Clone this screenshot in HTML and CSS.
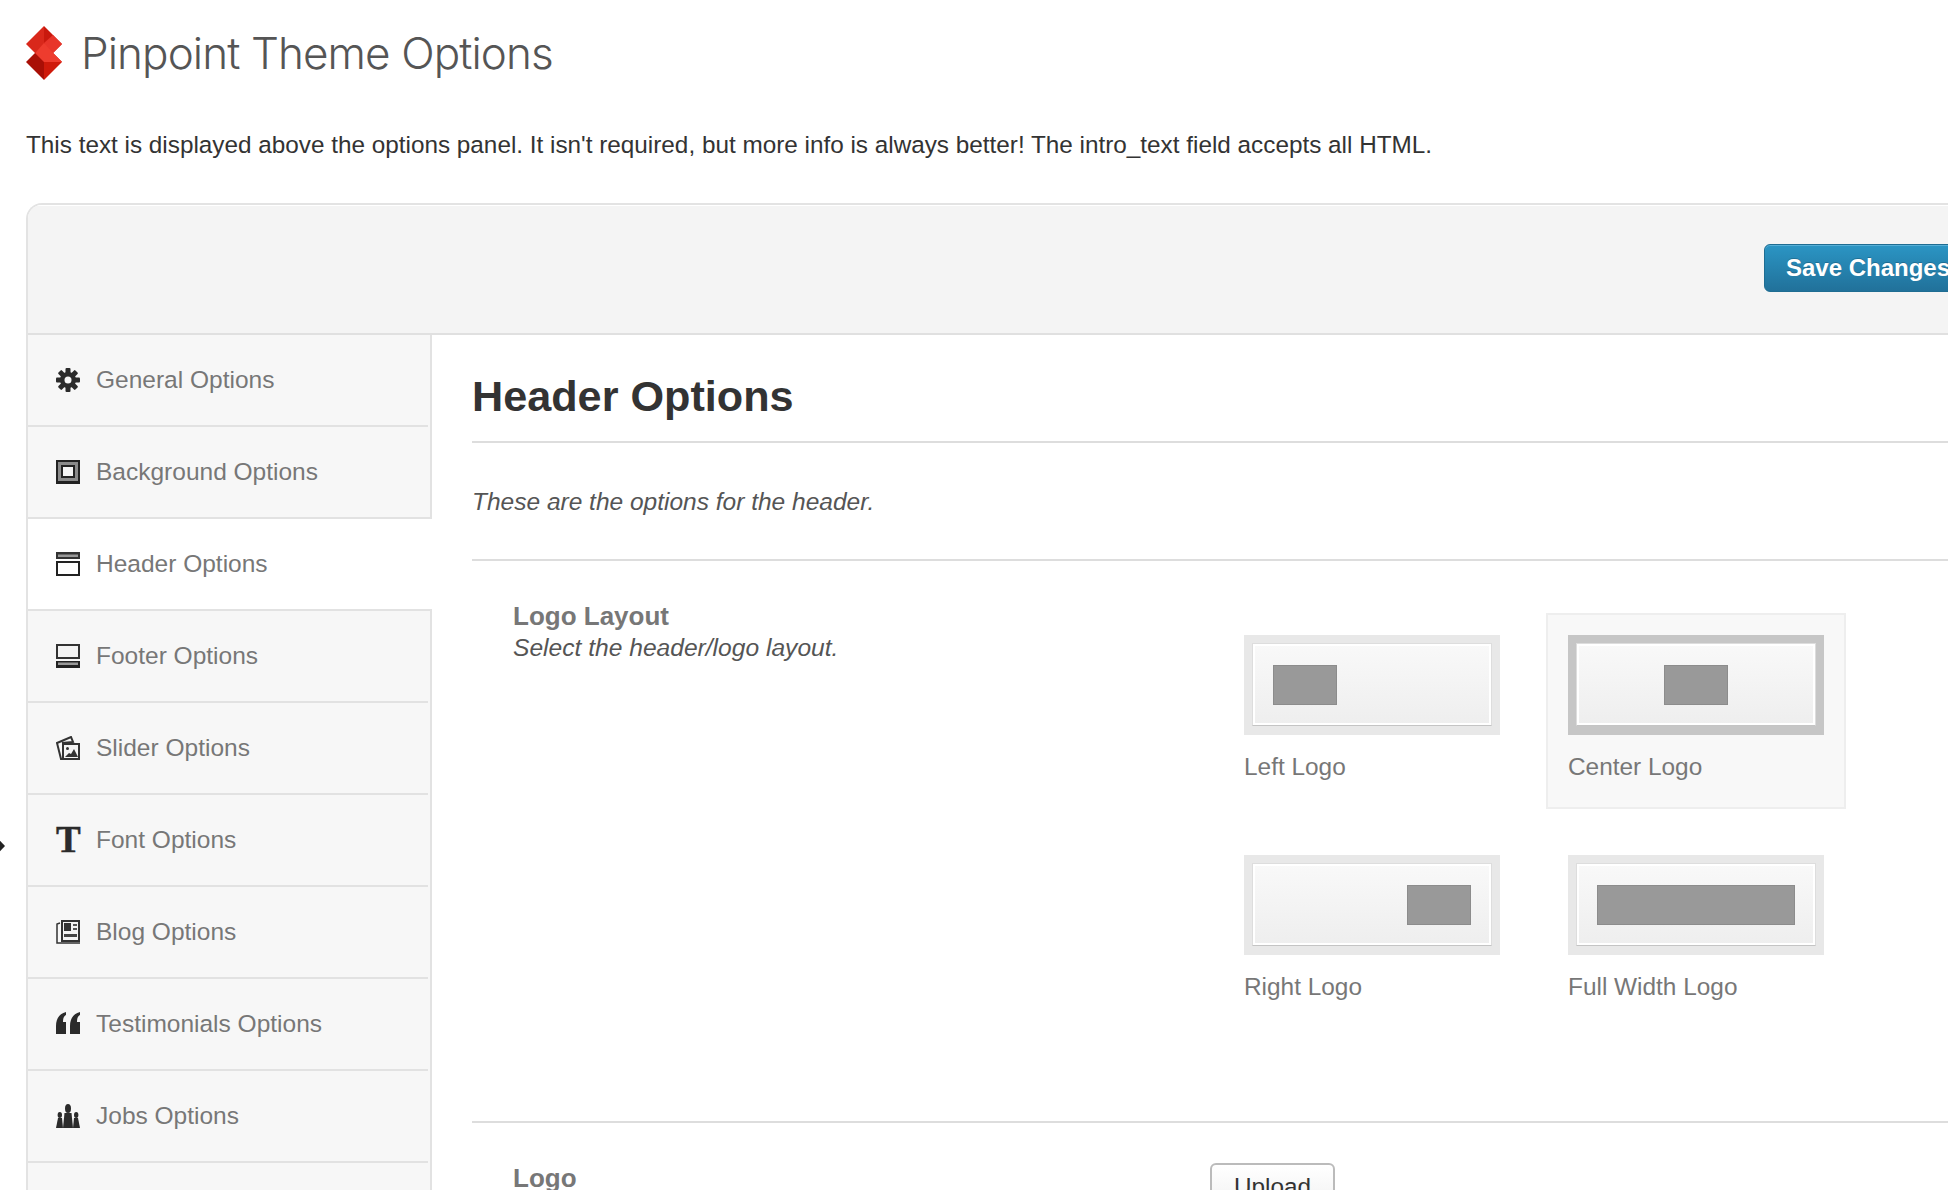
FILE: index.html
```html
<!DOCTYPE html>
<html>
<head>
    <title>Pinpoint Theme Options</title>
    <link rel="stylesheet" href="styles.css">
</head>
<body>
    <div class="page-title">
        <svg class="logo" viewBox="0 0 36 54" width="36" height="54">
            <polygon points="18,0 0,18 18,36" fill="#d9281b"/>
            <polygon points="18,0 36,18 18,36" fill="#c9190e"/>
            <polygon points="0,36 18,18 18,54" fill="#a90f06"/>
            <polygon points="36,36 18,18 18,54" fill="#cf1a0b"/>
            <polygon points="18,17 27,9 36,18 27,27 36,36 27,36" fill="#e8352a"/>
            <polygon points="9,27 18,17 27,27 36,36 27,36 18,36" fill="#ee3c2e"/>
        </svg>
        <h1>Pinpoint Theme Options</h1>
    </div>

    <p class="intro">This text is displayed above the options panel. It isn't required, but more info is always better! The intro_text field accepts all HTML.</p>

    <div class="panel">
        <div class="panel-top">
            <button class="save">Save Changes</button>
        </div>
        <div class="panel-body">
            <ul class="side">
                <li>
                    <svg class="ico" viewBox="0 0 24 24">
                        <g fill="#2b2b2b">
                            <rect x="9.500" y="0" width="5" height="24" rx="1"/>
                            <rect x="9.500" y="0" width="5" height="24" rx="1" transform="rotate(45 12 12)"/>
                            <rect x="9.500" y="0" width="5" height="24" rx="1" transform="rotate(90 12 12)"/>
                            <rect x="9.500" y="0" width="5" height="24" rx="1" transform="rotate(135 12 12)"/>
                            <circle cx="12" cy="12" r="8"/>
                        </g>
                        <circle cx="12" cy="12" r="3.500" fill="#f7f7f7"/>
                    </svg>
                    General Options
                </li>
                <li>
                    <svg class="ico" viewBox="0 0 24 24">
                        <rect width="24" height="24" fill="#222"/>
                        <rect x="2" y="2" width="20" height="19" fill="#8a8a8a"/>
                        <rect x="5" y="5" width="14" height="13" fill="#222"/>
                        <rect x="7" y="7" width="10" height="9" fill="#f4f4f4"/>
                    </svg>
                    Background Options
                </li>
                <li class="active">
                    <svg class="ico" viewBox="0 0 24 24">
                        <rect width="24" height="7" fill="#333"/>
                        <rect x="2" y="2.500" width="20" height="2.500" fill="#999"/>
                        <rect y="9" width="24" height="15" fill="#222"/>
                        <rect x="2" y="11" width="20" height="11" fill="#fff"/>
                    </svg>
                    Header Options
                </li>
                <li>
                    <svg class="ico" viewBox="0 0 24 24">
                        <rect width="24" height="15" fill="#333"/>
                        <rect x="2" y="2" width="20" height="11" fill="#f4f4f4"/>
                        <rect y="17" width="24" height="7" fill="#222"/>
                        <rect x="2" y="18.500" width="20" height="2.500" fill="#999"/>
                    </svg>
                    Footer Options
                </li>
                <li>
                    <svg class="ico" viewBox="0 0 24 24">
                        <path d="M1 7 L15 1 L17 6 L7 7 L8 23 L5 23 Z" fill="none" stroke="#333" stroke-width="2"/>
                        <rect x="6" y="7" width="18" height="17" fill="#333"/>
                        <rect x="8" y="9" width="14" height="13" fill="#f4f4f4"/>
                        <circle cx="11.500" cy="12.500" r="1.500" fill="#333"/>
                        <path d="M9 21 L13 17 L15 18 L18 13 L22 21 Z" fill="#333"/>
                    </svg>
                    Slider Options
                </li>
                <li>
                    <span class="ico ico-t">T</span>
                    Font Options
                </li>
                <li>
                    <svg class="ico" viewBox="0 0 24 24">
                        <path d="M4 3 L1 4 L1 23 L24 23" fill="none" stroke="#333" stroke-width="1.500"/>
                        <rect x="5" y="0" width="19" height="22" fill="#333"/>
                        <rect x="7" y="2" width="15" height="18" fill="#f4f4f4"/>
                        <rect x="8" y="3" width="7" height="8" fill="#333"/>
                        <rect x="17" y="4" width="4" height="2" fill="#555"/>
                        <rect x="17" y="8" width="4" height="2" fill="#555"/>
                        <rect x="8" y="14" width="13" height="3" fill="#444"/>
                    </svg>
                    Blog Options
                </li>
                <li>
                    <svg class="ico" viewBox="0 0 24 24">
                        <path d="M0 14 C0 7 3 2 10 0 L10 3 C8 4 7 6 7 10 L10 10 L10 22 L0 22 Z" fill="#2b2b2b"/>
                        <path d="M14 14 C14 7 17 2 24 0 L24 3 C22 4 21 6 21 10 L24 10 L24 22 L14 22 Z" fill="#2b2b2b"/>
                    </svg>
                    Testimonials Options
                </li>
                <li>
                    <svg class="ico" viewBox="0 0 24 24">
                        <g fill="#2b2b2b">
                            <ellipse cx="12" cy="4.500" rx="3" ry="4.500"/>
                            <path d="M8.500 9 L15.500 9 L17 24 L7 24 Z"/>
                            <ellipse cx="3.800" cy="11" rx="2.200" ry="3"/>
                            <path d="M2 14 L6 14 L7 24 L0 24 Z"/>
                            <ellipse cx="20.200" cy="11" rx="2.200" ry="3"/>
                            <path d="M18 14 L22 14 L24 24 L17 24 Z"/>
                        </g>
                    </svg>
                    Jobs Options
                </li>
                <li></li>
            </ul>

            <div class="main">
                <h2>Header Options</h2>
                <p class="section-desc">These are the options for the header.</p>

                <div class="row row-layout">
                    <div class="row-label">
                        <strong>Logo Layout</strong>
                        <em>Select the header/logo layout.</em>
                    </div>
                    <div class="layouts">
                        <div class="layout">
                            <div class="thumb"><div class="thumb-in"><div class="block"></div></div></div>
                            <span>Left Logo</span>
                        </div>
                        <div class="layout selected">
                            <div class="thumb"><div class="thumb-in in-center"><div class="block"></div></div></div>
                            <span>Center Logo</span>
                        </div>
                        <div class="layout">
                            <div class="thumb"><div class="thumb-in in-right"><div class="block"></div></div></div>
                            <span>Right Logo</span>
                        </div>
                        <div class="layout">
                            <div class="thumb"><div class="thumb-in in-center"><div class="block block-full"></div></div></div>
                            <span>Full Width Logo</span>
                        </div>
                    </div>
                </div>

                <div class="row">
                    <div class="row-label">
                        <strong>Logo</strong>
                    </div>
                    <button class="upload">Upload</button>
                </div>
            </div>
        </div>
    </div>

    <div class="nav-arrow"></div>
</body>
</html>
```

FILE: styles.css
```css
html, body {
    height: 1190px;
    overflow: hidden;
}

body {
    margin: 0;
    padding-left: 26px;
    background: #fff;
    color: #333;
    font-family: "Liberation Sans", Arial, sans-serif;
    font-size: 24.3px;
    position: relative;
}

.page-title {
    display: flex;
    align-items: center;
    gap: 19px;
    padding-top: 26px;
    height: 54px;
}

.logo {
    flex: none;
}

h1 {
    margin: 0;
    font-family: Inter, "Liberation Sans", sans-serif;
    font-weight: 300;
    font-size: 44px;
    letter-spacing: -0.9px;
    color: #555;
}

.intro {
    margin: 49px 0 42px;
    line-height: 32px;
    white-space: nowrap;
}

.panel {
    width: 2000px;
    box-sizing: border-box;
    border-top: 2px solid #e3e3e3;
    border-left: 2px solid #e3e3e3;
    border-top-left-radius: 16px;
    overflow: hidden;
}

.panel-top {
    height: 130px;
    box-sizing: border-box;
    padding: 39px 54px 0 0;
    display: flex;
    justify-content: flex-end;
    align-items: flex-start;
    background: #f4f4f4;
    box-shadow: inset 0 1px 0 #fff;
    border-bottom: 2px solid #e0e0e0;
}

.save {
    height: 48px;
    padding: 0 21px;
    font: bold 24px "Liberation Sans", Arial, sans-serif;
    color: #fff;
    text-shadow: 0 -1px 0 rgba(0, 0, 0, 0.2);
    background: linear-gradient(#2b95c4, #21719a);
    border: 1px solid #1f6d92;
    border-radius: 6px;
    box-shadow: inset 0 1px 0 #56aed6;
}

.panel-body {
    display: flex;
}

.side {
    width: 404px;
    box-sizing: border-box;
    margin: 0;
    padding: 0;
    list-style: none;
    background: #f7f7f7;
    border-right: 2px solid #e2e2e2;
    flex: none;
}

.side li {
    height: 92px;
    box-sizing: border-box;
    padding-left: 28px;
    margin-right: 2px;
    display: flex;
    align-items: center;
    gap: 16px;
    font-size: 24.5px;
    color: #777;
    border-bottom: 2px solid #e2e2e2;
}

.side li.active {
    height: 94px;
    margin-top: -2px;
    margin-right: -2px;
    background: #fff;
    border-top: 2px solid #e2e2e2;
}

.ico {
    width: 24px;
    height: 24px;
    flex: none;
}

.ico-t {
    font: bold 37px/24px "Liberation Serif", serif;
    -webkit-text-stroke: 0.5px #2b2b2b;
    color: #2b2b2b;
    text-align: center;
}

.main {
    flex: 1;
    padding-left: 40px;
}

h2 {
    margin: 0;
    padding: 37px 0 21px;
    font-size: 43.2px;
    line-height: 48px;
    color: #333;
    border-bottom: 2px solid #ddd;
}

.section-desc {
    margin: 0;
    padding: 43px 0 41px;
    line-height: 32px;
    font-size: 24.5px;
    font-style: italic;
    color: #555;
    border-bottom: 2px solid #ddd;
}

.row {
    display: flex;
    padding: 39px 0 0 41px;
}

.row-layout {
    padding-bottom: 92px;
    border-bottom: 2px solid #ddd;
}

.row-label {
    width: 697px;
    flex: none;
    line-height: 32px;
}

.row-label strong {
    display: block;
    color: #777;
    font-size: 26px;
}

.row-label em {
    display: block;
    font-size: 24.6px;
    color: #555;
}

.layouts {
    display: grid;
    grid-template-columns: 300px 300px;
    gap: 24px;
    margin: 13px 0 0 12px;
}

.layout {
    height: 196px;
    box-sizing: border-box;
    padding: 20px 20px 0;
    border: 2px solid transparent;
    color: #777;
}

.layout.selected {
    background: #f8f8f8;
    border-color: #eee;
}

.layout span {
    display: block;
    margin-top: 16px;
    line-height: 32px;
    font-size: 24.4px;
}

.thumb {
    width: 256px;
    height: 100px;
    box-sizing: border-box;
    padding: 8px 8px 9px;
    background: #e8e8e8;
}

.selected .thumb {
    background: #c6c6c6;
}

.thumb-in {
    height: 100%;
    box-sizing: border-box;
    padding: 0 20px;
    display: flex;
    align-items: center;
    background: linear-gradient(#f9f9f9, #eee);
    border: 1px solid #ddd;
    border-bottom-color: #c4c4c4;
    box-shadow: inset 0 0 0 2px #fff;
}

.in-center {
    justify-content: center;
}

.in-right {
    justify-content: flex-end;
}

.block {
    width: 64px;
    height: 40px;
    box-sizing: border-box;
    background: #999;
    border: 1px solid #8c8c8c;
}

.block-full {
    width: 200px;
}

.upload {
    height: 48px;
    padding: 0 22px;
    margin: 1px 0 0;
    font: 24.3px "Liberation Sans", Arial, sans-serif;
    color: #333;
    background: linear-gradient(#fff, #f1f1f1);
    border: 2px solid #bbb;
    border-radius: 6px;
}

.nav-arrow {
    position: absolute;
    left: -8px;
    top: 838px;
    width: 13px;
    height: 16px;
    background: #222;
    clip-path: polygon(40% 0, 100% 50%, 40% 100%, 0 100%, 0 0);
}
```
